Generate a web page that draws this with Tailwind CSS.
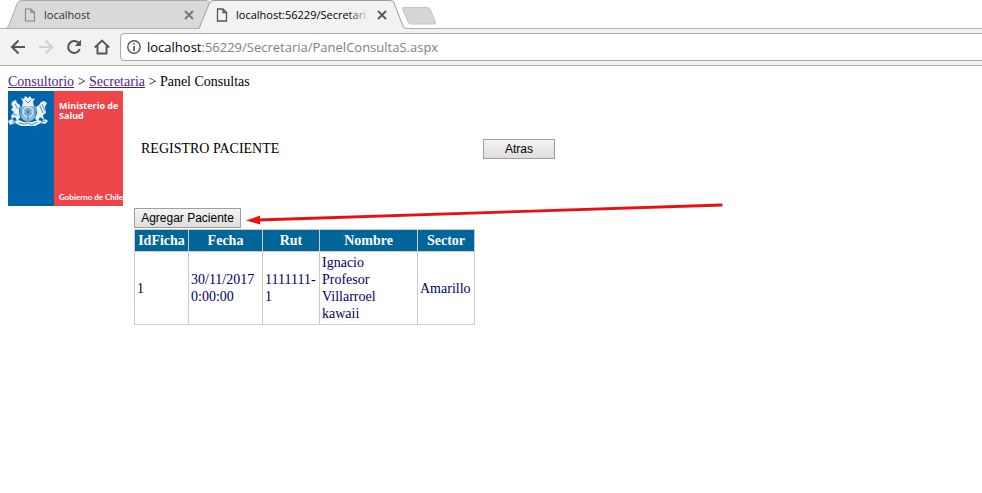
<!DOCTYPE html>
<html lang="es">
<head>
<meta charset="utf-8">
<title>Panel Consultas</title>
<script src="https://cdn.jsdelivr.net/npm/@tailwindcss/browser@4"></script>
</head>
<body class="bg-white text-black overflow-x-hidden">
<header class="font-['Open_Sans',sans-serif]">
  <nav aria-label="Pestañas" class="relative flex h-7 items-center pl-6 text-[11px] text-[#333]">
    <svg class="absolute left-0 top-0" width="450" height="29" viewBox="0 0 450 29" aria-hidden="true">
      <path d="M6 28.5Q8 28 9 25L17 4Q18.500 .5 21 .5H206Q209 .5 210 3L219 28.500Z" fill="#d9d9d9" stroke="#aaa"/>
      <path d="M199 29Q200 28 201 25L209 4Q210.500 .5 213 .5H390Q393 .5 394 3L403 26Q404 28.500 407 28.500V29Z" fill="#f2f2f2"/>
      <path d="M199 28.500L209 4Q210.500 .5 213 .5H390Q393 .5 394 3L403 26Q404 28.500 407 28.500" fill="none" stroke="#9d9d9d"/>
      <path d="M404 7.500H427Q429 7.500 430 9L435.500 22Q436 24 434 24H411Q409 24 408 22L402.500 9Q402 7.500 404 7.500Z" fill="#d5d5d5" stroke="#c4c4c4"/>
    </svg>
    <a href="#" class="relative flex h-7 w-[160px] items-center gap-2 pt-0.5">
      <svg width="12" height="14" viewBox="0 0 12 14" fill="none" stroke="#888" stroke-width="1.200"><path d="M1.500 1H7L10.500 4.500V13H1.500ZM7 1V4.500H10.500"/></svg>
      <span>localhost</span>
    </a>
    <button aria-label="Cerrar localhost" class="relative flex size-3 items-center pt-0.5"><svg width="10" height="10" viewBox="0 0 10 10" stroke="#777" stroke-width="1.800"><path d="M1 1L9 9M9 1L1 9"/></svg></button>
    <a href="#" class="relative ml-5 flex h-7 w-[155px] items-center gap-2 pt-0.5">
      <svg class="shrink-0" width="12" height="14" viewBox="0 0 12 14" fill="none" stroke="#555" stroke-width="1.300"><path d="M1.500 1H7L10.500 4.500V13H1.500ZM7 1V4.500H10.500"/></svg>
      <span class="relative w-[135px] whitespace-nowrap text-black">localhost:56229/Secretari<span class="absolute inset-y-0 right-0 w-6 bg-linear-to-r from-[#f2f2f2]/0 to-[#f2f2f2]"></span></span>
    </a>
    <button aria-label="Cerrar Panel Consultas" class="relative ml-1.5 flex size-3 items-center pt-0.5"><svg width="10" height="10" viewBox="0 0 10 10" stroke="#555" stroke-width="1.800"><path d="M1 1L9 9M9 1L1 9"/></svg></button>
    <span class="absolute left-[406px] right-0 top-7 h-px bg-[#b0b0b0]"></span>
    <span class="absolute left-0 top-7 h-px w-[199px] bg-[#b0b0b0]"></span>
  </nav>
  <div class="flex h-[38px] items-center border-b border-[#b0b0b0] bg-[#f2f2f2] pl-2.5">
    <div class="flex w-[110px] items-center gap-3 text-[#555]">
      <button aria-label="Atrás"><svg width="16" height="16" viewBox="0 0 16 16" fill="none" stroke="currentColor" stroke-width="2"><path d="M15 8H2.500M8.500 1.500L2 8L8.500 14.500"/></svg></button>
      <button aria-label="Adelante" class="text-[#d0d0d0]"><svg width="16" height="16" viewBox="0 0 16 16" fill="none" stroke="currentColor" stroke-width="2"><path d="M1 8H13.500M7.500 1.500L14 8L7.500 14.500"/></svg></button>
      <button aria-label="Recargar"><svg width="16" height="16" viewBox="0 0 16 16"><path d="M13.800 10A6 6 0 1 1 12.500 3.800" fill="none" stroke="currentColor" stroke-width="2"/><path d="M15 .8V7H8.800Z" fill="currentColor"/></svg></button>
      <button aria-label="Inicio"><svg width="16" height="16" viewBox="0 0 16 16" fill="none" stroke="currentColor" stroke-width="1.900"><path d="M.8 8.500L8 1.500L15.200 8.500M3.500 7V14.500H12.500V7"/></svg></button>
    </div>
    <div class="relative -mr-1 h-7 grow rounded-sm border border-[#a9a9a9] bg-white">
      <svg class="absolute left-1.5 top-1.5" width="14" height="14" viewBox="0 0 14 14" aria-hidden="true"><circle cx="7" cy="7" r="6.200" fill="none" stroke="#555" stroke-width="1.400"/><path d="M7 3V4.600M7 6V11" stroke="#555" stroke-width="1.700"/></svg>
      <div role="textbox" aria-label="Dirección" contenteditable="true" class="pl-[26px] text-[13px] leading-[26px] text-[#808080]"><span class="text-black">localhost</span>:56229/Secretaria/PanelConsultaS.aspx</div>
    </div>
  </div>
</header>
<main class="relative px-2 pt-[7px] font-['Liberation_Serif',serif] text-[14px] leading-[17px]">
  <nav aria-label="Ruta" class="pb-px"><a href="#" class="text-[#551a8b] underline">Consultorio</a> &gt; <a href="#" class="text-[#551a8b] underline">Secretaria</a> &gt; <span>Panel Consultas</span></nav>
  <section class="flex items-center">
    <svg class="shrink-0" width="115" height="115" viewBox="0 0 115 115" role="img" aria-label="Ministerio de Salud, Gobierno de Chile">
      <path fill="#0064a8" d="M0 0H46V115H0Z"/><path fill="#ee454b" d="M46 0H115V115H46Z"/>
      <g fill="#e5f0f7">
        <path d="M15 11L13 7L16 8L17 5L20 7L22 5L24 8L27 7L25 11L26 15H14Z"/>
        <path d="M12 15H28V24Q27 29 20 31Q13 29 12 24Z" fill="#8fbcdb"/>
        <path d="M5 10L8 9L9 12L12 14L11 20L12 27L9 30L7 26L4 28L3 25L6 21L3 19L5 16L3 13Z"/>
        <path d="M36 10L33 11L31 14L28 16L29 22L27 28L30 30L32 26L36 29L35 24L38 22L37 16L39 12Z"/>
        <path d="M0 30L4 28L6 30L11 29L16 31H24L30 29L34 30L37 28L40 30L37 33L33 32L27 35H13L7 32L2 34Z"/>
      </g>
      <circle cx="20" cy="21" r="5" fill="none" stroke="#e5f0f7"/>
      <path d="M13 15V25M27 15V25M20 17V30M17 23L23 19M17 19L23 23M5 23L9 24M32 15L35 22M34 13L37 20M7 13L10 18M11 32L16 33L20 32L24 34L29 31M4 31L8 31M33 31L37 30M17 9L20 12L23 9" fill="none" stroke="#2879ac" stroke-width=".8"/>
      <g fill="#fff" font-family="Open Sans, sans-serif" font-weight="700"><text x="51" y="18" font-size="9">Ministerio de</text><text x="51" y="28" font-size="9">Salud</text><text x="51" y="109" font-family="Lato, sans-serif" font-size="8">Gobierno de Chile</text></g>
    </svg>
    <h1 class="ml-[18px] w-[342px]">REGISTRO PACIENTE</h1>
    <button class="h-5 w-[72px] border border-[#a0a0a0] bg-linear-to-b from-[#f4f4f4] to-[#dddddd] font-['Liberation_Sans',sans-serif] text-[12px] leading-none">Atras</button>
  </section>
  <section class="relative ml-[126px] pt-0.5">
    <button class="block h-5 w-[107px] border border-[#a0a0a0] bg-linear-to-b from-[#f4f4f4] to-[#dddddd] font-['Liberation_Sans',sans-serif] text-[12px] leading-none">Agregar Paciente</button>
    <svg class="absolute left-[110px] -top-1" width="482" height="24" viewBox="0 0 482 24" aria-hidden="true"><path d="M14 18L478.500 3" stroke="#ea0f12" stroke-width="2.800"/><path d="M2 18.500L16 13.500V22.500Z" fill="#f30f10"/></svg>
    <table class="mt-px w-[341px] table-fixed border-collapse text-left text-[#000066]">
      <colgroup><col class="w-[54px]"><col class="w-[74px]"><col class="w-[57px]"><col class="w-[98px]"><col class="w-[57px]"></colgroup>
      <thead><tr class="bg-[#006699] text-center text-white [&>th]:border [&>th]:border-[#ccc] [&>th]:p-0.5"><th>IdFicha</th><th>Fecha</th><th>Rut</th><th>Nombre</th><th>Sector</th></tr></thead>
      <tbody><tr class="[&>td]:border [&>td]:border-[#ccc] [&>td]:p-0.5"><td>1</td><td>30/11/2017 0:00:00</td><td>1111111-1</td><td>Ignacio<br>Profesor<br>Villarroel<br>kawaii</td><td>Amarillo</td></tr></tbody>
    </table>
  </section>
</main>
</body>
</html>
